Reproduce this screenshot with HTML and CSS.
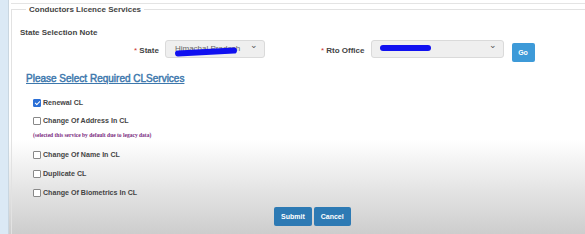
FILE: index.html
```html
<!DOCTYPE html>
<html lang="en">
<head>
    <meta charset="UTF-8">
    <title>Conductors Licence Services</title>
    <link rel="stylesheet" href="styles.css">
</head>
<body>

<div class="page">
    <div class="side"></div>
    <div class="main">
        <div class="top-panel"></div>
        <fieldset class="box">
            <legend>Conductors Licence Services</legend>
            <div class="note">State Selection Note</div>

            <div class="selects">
                <label class="lbl lbl-state"><span class="req">*</span> State</label>
                <div class="select select-state">
                    <span class="val">Himachal Pradesh</span>
                    <span class="scribble scribble-state"></span>
                    <span class="arrow">&#8964;</span>
                </div>
                <label class="lbl lbl-rto"><span class="req">*</span> Rto Office</label>
                <div class="select select-rto">
                    <span class="scribble scribble-rto"></span>
                    <span class="arrow">&#8964;</span>
                </div>
                <button class="btn btn-go">Go</button>
            </div>

            <a class="heading" href="#">Please Select Required CLServices</a>

            <ul class="services">
                <li><span class="chk checked"></span>Renewal CL</li>
                <li><span class="chk"></span>Change Of Address In CL</li>
                <li class="legacy">(selected this service by default due to legacy data)</li>
                <li><span class="chk"></span>Change Of Name In CL</li>
                <li><span class="chk"></span>Duplicate CL</li>
                <li><span class="chk"></span>Change Of Biometrics In CL</li>
            </ul>

            <div class="actions">
                <button class="btn btn-dark">Submit</button>
                <button class="btn btn-dark">Cancel</button>
            </div>
        </fieldset>
    </div>
</div>

</body>
</html>
```

FILE: styles.css
```css
body {
    margin: 0;
    font-family: "Liberation Sans", Arial, sans-serif;
    background: #fff;
}
.page {
    display: flex;
    width: 585px;
    height: 234px;
    overflow: hidden;
}
.side {
    width: 8px;
    background: #dbe9f5;
    border-right: 1px solid #c9d6e0;
}
.main {
    flex: 1;
    background: linear-gradient(to bottom, #fff 0, #fff 140px, #e4e4e4 190px, #cdcdcd 234px);
}
.top-panel {
    height: 3px;
    border-bottom: 1px solid #e4e4e4;
    margin-left: 2px;
}
.box {
    margin: 1px 0 0 2px;
    padding: 0 0 0 8px;
    border: 1px solid #e2e2e2;
    border-right: none;
    border-bottom: none;
    height: 232px;
    box-sizing: border-box;
}
.box legend {
    font-size: 8px;
    font-weight: bold;
    color: #444;
    padding: 0 3px;
    margin-left: 6px;
}
.note {
    font-size: 8px;
    font-weight: bold;
    color: #444;
    margin-top: 14px;
}
.selects {
    display: flex;
    align-items: flex-start;
    margin-top: 3px;
    height: 28px;
}
.lbl {
    font-size: 8px;
    font-weight: bold;
    color: #444;
    margin-top: 6px;
}
.req {
    color: #c33;
    font-weight: normal;
}
.lbl-state {
    margin-left: 114px;
}
.lbl-rto {
    margin-left: 56px;
}
.select {
    position: relative;
    height: 18px;
    background: #efefef;
    border: 1px solid #dadada;
    border-radius: 3px;
    box-sizing: border-box;
    font-size: 8px;
    color: #666;
}
.select-state {
    width: 100px;
    margin-left: 6px;
}
.select-rto {
    width: 133px;
    margin-left: 6px;
}
.val {
    position: absolute;
    left: 9px;
    top: 3px;
}
.scribble {
    position: absolute;
    background: #1010f0;
    border-radius: 5px;
    height: 6px;
}
.scribble-state {
    left: 9px;
    top: 8px;
    width: 62px;
    transform: rotate(-3deg);
}
.scribble-rto {
    left: 8px;
    top: 4px;
    width: 51px;
}
.arrow {
    position: absolute;
    right: 6px;
    top: -1px;
    font-size: 9px;
    color: #555;
}
.btn {
    font-family: "Liberation Sans", Arial, sans-serif;
    font-size: 7px;
    font-weight: bold;
    color: #fff;
    border: none;
    border-radius: 2px;
    cursor: pointer;
}
.btn-go {
    background: #3d9ad8;
    width: 23px;
    height: 19px;
    margin: 3px 0 0 8px;
}
.heading {
    display: inline-block;
    margin: 2px 0 0 6px;
    font-size: 10px;
    color: #3d78ad;
    text-decoration: underline;
    -webkit-text-stroke: 0.45px #3d78ad;
}
.services {
    list-style: none;
    margin: 8px 0 0 13px;
    padding: 0;
}
.services li {
    display: flex;
    align-items: center;
    font-size: 7.1px;
    font-weight: bold;
    color: #444;
    height: 19px;
}
.services li:first-child {
    height: 17px;
}
.services li.legacy {
    font-family: "Liberation Serif", "Times New Roman", serif;
    font-size: 5.5px;
    color: #7a2a80;
    height: 15px;
    align-items: flex-start;
    padding-top: 2px;
    box-sizing: border-box;
}
.chk {
    width: 6px;
    height: 6px;
    border: 1px solid #888;
    border-radius: 1px;
    margin-right: 2px;
    background: #fff;
}
.chk.checked {
    background: #2b6fd6;
    border-color: #2b6fd6;
    position: relative;
}
.chk.checked::after {
    content: "";
    position: absolute;
    left: 2px;
    top: 0;
    width: 2px;
    height: 4px;
    border: solid #fff;
    border-width: 0 1px 1px 0;
    transform: rotate(45deg);
}
.actions {
    display: flex;
    gap: 2px;
    margin: 5px 0 0 254px;
}
.btn-dark {
    background: #2d7ab4;
    height: 19px;
    padding: 0 7px;
}
```
